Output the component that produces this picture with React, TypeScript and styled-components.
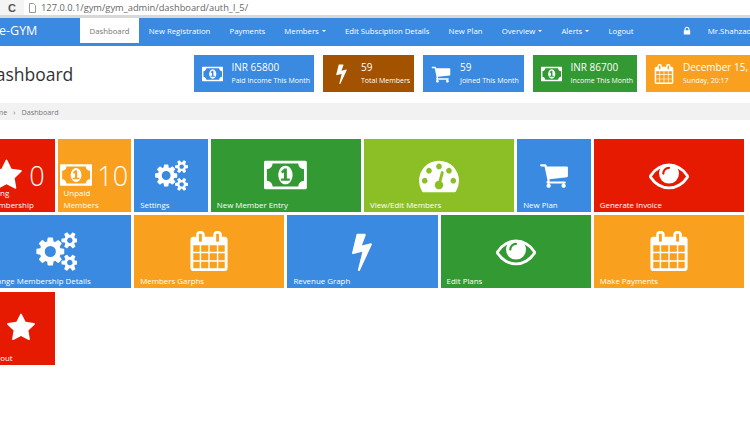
import React from "react";
import styled, { createGlobalStyle } from "styled-components";

const Global = createGlobalStyle`
  html, body { margin: 0; padding: 0; width: 750px; height: 422px; overflow: hidden; background: #fff; }
  body { font-family: "Open Sans", "Liberation Sans", sans-serif; -webkit-font-smoothing: antialiased; }
  #root { width: 750px; height: 422px; overflow: hidden; }
`;

const P = {
  star: { w: 1792, d: "M1728 647q0 22-26 48l-363 354 86 500q1 7 1 20 0 21-10.5 35.5t-30.5 14.5q-19 0-40-12l-449-236-449 236q-22 12-40 12-21 0-31.5-14.5t-10.5-35.5q0-6 2-20l86-500-364-354q-25-27-25-48 0-37 56-46l502-73 225-455q19-41 49-41t49 41l225 455 502 73q56 9 56 46z" },
  bolt: { w: 1792, d: "M1333 566q18 20 7 44l-540 1157q-13 25-42 25-4 0-14-2-17-5-25.5-19t-4.5-30l197-808-406 101q-4 1-12 1-18 0-31-11-18-15-13-39l201-825q4-14 16-23t28-9h328q19 0 32 12.5t13 29.5q0 8-5 18l-171 463 396-98q8-2 12-2 19 0 34 15z" },
  cart: { w: 1792, d: "M704 1536q0 52-38 90t-90 38-90-38-38-90 38-90 90-38 90 38 38 90zm896 0q0 52-38 90t-90 38-90-38-38-90 38-90 90-38 90 38 38 90zm128-1088v512q0 24-16.5 42.5t-40.5 21.5l-1044 122q13 60 13 70 0 16-24 64h920q26 0 45 19t19 45-19 45-45 19h-1024q-26 0-45-19t-19-45q0-11 8-31.5t16-36 21.5-40 15.5-29.5l-177-823h-204q-26 0-45-19t-19-45 19-45 45-19h256q16 0 28.5 6.5t19.5 15.5 13 24.5 8 26 5.5 29.5 4.5 26h1201q26 0 45 19t19 45z" },
  eye: { w: 1792, d: "M1664 960q-152-236-381-353 61 104 61 225 0 185-131.5 316.5t-316.5 131.5-316.5-131.5-131.5-316.5q0-121 61-225-229 117-381 353 133 205 333.5 326.5t434.5 121.5 434.5-121.5 333.5-326.5zm-720-384q0-20-14-34t-34-14q-125 0-214.5 89.5t-89.5 214.5q0 20 14 34t34 14 34-14 14-34q0-86 61-147t147-61q20 0 34-14t14-34zm848 384q0 34-20 69-140 230-376.5 368.5t-499.5 138.5-499.5-139-376.5-368q-20-35-20-69t20-69q140-229 376.5-368t499.5-139 499.5 139 376.5 368q20 35 20 69z" },
  calendar: { w: 1792, d: "M192 1664h288v-288h-288v288zm352 0h320v-288h-320v288zm-352-352h288v-320h-288v320zm352 0h320v-320h-320v320zm-352-384h288v-288h-288v288zm736 736h320v-288h-320v288zm-384-736h320v-288h-320v288zm768 736h288v-288h-288v288zm-384-352h320v-320h-320v320zm-352-864v-288q0-13-9.5-22.5t-22.5-9.5h-64q-13 0-22.5 9.5t-9.5 22.5v288q0 13 9.5 22.5t22.5 9.5h64q13 0 22.5-9.5t9.5-22.5zm736 864h288v-320h-288v320zm-384-384h320v-288h-320v288zm384 0h288v-288h-288v288zm32-480v-288q0-13-9.5-22.5t-22.5-9.5h-64q-13 0-22.5 9.5t-9.5 22.5v288q0 13 9.5 22.5t22.5 9.5h64q13 0 22.5-9.5t9.5-22.5zm384-64v1280q0 52-38 90t-90 38h-1408q-52 0-90-38t-38-90v-1280q0-52 38-90t90-38h128v-96q0-66 47-113t113-47h64q66 0 113 47t47 113v96h384v-96q0-66 47-113t113-47h64q66 0 113 47t47 113v96h128q52 0 90 38t38 90z" },
  money: { w: 1920, d: "M768 1152h384v-96h-128v-448h-114l-148 137 77 80q42-37 55-57h2v288h-128v96zm512-256q0 70-21 142t-59.5 134-101.5 101-138 39-138-39-101.5-101-59.5-134-21-142 21-142 59.5-134 101.5-101 138-39 138 39 101.5 101 59.5 134 21 142zm512 256v-512q-106 0-181-75t-75-181h-1152q0 106-75 181t-181 75v512q106 0 181 75t75 181h1152q0-106 75-181t181-75zm128-832v1152q0 26-19 45t-45 19h-1792q-26 0-45-19t-19-45v-1152q0-26 19-45t45-19h1792q26 0 45 19t19 45z" },
  cogs: { w: 1920, d: "M960 896q0-106-75-181t-181-75-181 75-75 181 75 181 181 75 181-75 75-181zm768 512q0-52-38-90t-90-38-90 38-38 90q0 53 37.5 90.5t90.5 37.5 90.5-37.5 37.5-90.5zm0-1024q0-52-38-90t-90-38-90 38-38 90q0 53 37.5 90.5t90.5 37.5 90.5-37.5 37.5-90.5zm-384 421v185q0 10-7 19.5t-16 10.5l-155 24q-11 35-32 76 34 48 90 115 7 11 7 20 0 12-7 19-23 30-82.5 89.5t-78.5 59.5q-11 0-21-7l-115-90q-37 19-77 31-11 108-23 155-7 24-30 24h-186q-11 0-20-7.5t-10-17.5l-23-153q-34-10-75-31l-118 89q-7 7-20 7-11 0-21-8-144-133-144-160 0-9 7-19 10-14 41-53t47-61q-23-44-35-82l-152-24q-10-1-17-9.5t-7-19.5v-185q0-10 7-19.5t16-10.5l155-24q11-35 32-76-34-48-90-115-7-11-7-20 0-12 7-20 22-30 82-89t79-59q11 0 21 7l115 90q34-18 77-32 11-108 23-154 7-24 30-24h186q11 0 20 7.5t10 17.5l23 153q34 10 75 31l118-89q8-7 20-7 11 0 21 8 144 133 144 160 0 8-7 19-12 16-42 54t-45 60q23 48 34 82l152 23q10 2 17 10.5t7 19.5zm640 533v140q0 16-149 31-12 27-30 52 51 113 51 138 0 4-4 7-122 71-124 71-8 0-46-47t-52-68q-20 2-30 2t-30-2q-14 21-52 68t-46 47q-2 0-124-71-4-3-4-7 0-25 51-138-18-25-30-52-149-15-149-31v-140q0-16 149-31 13-29 30-52-51-113-51-138 0-4 4-7 4-2 35-20t59-34 30-16q8 0 46 46.5t52 67.5q20-2 30-2t30 2q51-71 92-112l6-2q4 0 124 70 4 3 4 7 0 25-51 138 17 23 30 52 149 15 149 31zm0-1024v140q0 16-149 31-12 27-30 52 51 113 51 138 0 4-4 7-122 71-124 71-8 0-46-47t-52-68q-20 2-30 2t-30-2q-14 21-52 68t-46 47q-2 0-124-71-4-3-4-7 0-25 51-138-18-25-30-52-149-15-149-31v-140q0-16 149-31 13-29 30-52-51-113-51-138 0-4 4-7 4-2 35-20t59-34 30-16q8 0 46 46.5t52 67.5q20-2 30-2t30 2q51-71 92-112l6-2q4 0 124 70 4 3 4 7 0 25-51 138 17 23 30 52 149 15 149 31z" },
  gauge: { w: 1792, d: "M384 1152q0-53-37.5-90.5t-90.5-37.5-90.5 37.5-37.5 90.5 37.5 90.5 90.5 37.5 90.5-37.5 37.5-90.5zm192-448q0-53-37.5-90.5t-90.5-37.5-90.5 37.5-37.5 90.5 37.5 90.5 90.5 37.5 90.5-37.5 37.5-90.5zm428 481l101-382q6-26-7.5-48.5t-38.5-29.5-48 6.5-30 39.5l-101 382q-60 5-107 43.5t-63 98.5q-20 77 20 146t117 89 146-20 89-117q16-60-6-117t-72-91zm660-33q0-53-37.5-90.5t-90.5-37.5-90.5 37.5-37.5 90.5 37.5 90.5 90.5 37.5 90.5-37.5 37.5-90.5zm-640-640q0-53-37.5-90.5t-90.5-37.5-90.5 37.5-37.5 90.5 37.5 90.5 90.5 37.5 90.5-37.5 37.5-90.5zm448 192q0-53-37.5-90.5t-90.5-37.5-90.5 37.5-37.5 90.5 37.5 90.5 90.5 37.5 90.5-37.5 37.5-90.5zm320 448q0 261-141 483-19 29-54 29h-1402q-35 0-54-29-141-221-141-483 0-182 71-348t191-286 286-191 348-71 348 71 286 191 191 286 71 348z" },
  lock: { w: 1792, d: "M640 768h512v-192q0-106-75-181t-181-75-181 75-75 181v192zm832 96v576q0 40-28 68t-68 28h-960q-40 0-68-28t-28-68v-576q0-40 28-68t68-28h32v-192q0-184 132-316t316-132 316 132 132 316v192h32q40 0 68 28t28 68z" },
};
type IconName = keyof typeof P;

const Svg = styled.svg`
  display: block;
  flex: none;
  fill: currentColor;
`;

const Icon = ({ name, size }: { name: IconName; size: number }) => (
  <Svg width={(size * P[name].w) / 1792} height={size} viewBox={`0 0 ${P[name].w} 1792`}>
    <path d={P[name].d} />
  </Svg>
);

const Chrome = styled.div`
  height: 15px;
  display: flex;
  align-items: center;
  background: #f4f4f4;
  border-bottom: 3px solid #d8d8d8;
  overflow: hidden;
`;
const Reload = styled.span`
  width: 24px;
  text-align: center;
  font: 700 11px "Liberation Sans", sans-serif;
  color: #555;
`;
const AddressBar = styled.div`
  flex: 1;
  height: 15px;
  display: flex;
  align-items: center;
  gap: 5px;
  padding-left: 5px;
  background: #fff;
  font: 400 9.3px "Open Sans", sans-serif;
  color: #666;
`;
const PageGlyph = styled.svg`
  width: 7px;
  height: 10px;
  fill: none;
  stroke: #999;
`;

const Nav = styled.nav`
  height: 28px;
  display: flex;
  background: #398ae0;
  color: #fff;
  white-space: nowrap;
`;
const Brand = styled.div`
  width: 80px;
  margin-left: -1px;
  margin-right: 1px;
  line-height: 25px;
  font-size: 12.5px;
  flex: none;
`;
const NavItem = styled.a<{ $active?: boolean }>`
  height: 25px;
  padding: 0 9.6px;
  display: flex;
  align-items: center;
  gap: 3px;
  font-size: 7.75px;
  font-weight: 500;
  color: ${(p) => (p.$active ? "#777" : "#fff")};
  background: ${(p) => (p.$active ? "#fff" : "transparent")};
`;
const Caret = styled.i`
  width: 0;
  height: 0;
  border-left: 2.5px solid transparent;
  border-right: 2.5px solid transparent;
  border-top: 2.5px solid #fff;
`;
const NavRight = styled.div`
  margin-left: 38.5px;
  display: flex;
  align-items: center;
  height: 25px;
  gap: 16px;
  font-size: 7.9px;
  font-weight: 500;
`;

const Header = styled.header`
  height: 37px;
  margin: 9px 0 0 -17px;
  display: flex;
  align-items: center;
  white-space: nowrap;
`;
const Title = styled.h1`
  flex: 0 0 211px;
  margin: 0;
  font-size: 17.5px;
  font-weight: 400;
  color: #333;
`;
const Stats = styled.div`
  display: flex;
  gap: 9px;
`;
const Stat = styled.div<{ $bg: string; $w: number; $gap: number }>`
  width: ${(p) => p.$w}px;
  height: 37px;
  flex: none;
  display: flex;
  align-items: center;
  gap: ${(p) => p.$gap}px;
  padding-left: 8px;
  box-sizing: border-box;
  background: ${(p) => p.$bg};
  color: #fff;
`;
const StatBody = styled.div`
  display: flex;
  flex-direction: column;
`;
const StatTitle = styled.span`
  font-size: 10px;
  line-height: 15px;
`;
const StatSub = styled.span`
  font-size: 7px;
  line-height: 12px;
  font-weight: 500;
`;

const Breadcrumb = styled.div`
  height: 17px;
  margin: 11px 0 0 -19px;
  padding-left: 6px;
  display: flex;
  align-items: center;
  gap: 6px;
  background: #f2f2f2;
  font-size: 7.2px;
  color: #777;
  white-space: nowrap;
`;

const Grid = styled.main`
  width: 770px;
  margin: 19px 0 0 -19px;
  display: grid;
  grid-template-columns: repeat(10, 73.6px);
  grid-auto-rows: 73px;
  gap: 3.4px 3px;
`;
const Tile = styled.div<{ $bg: string; $span?: number }>`
  grid-column: span ${(p) => p.$span ?? 1};
  display: flex;
  flex-direction: column;
  background: ${(p) => p.$bg};
  color: #fff;
  overflow: hidden;
`;
const TileArt = styled.div<{ $nudge?: number }>`
  flex: 1;
  min-height: 0;
  display: flex;
  align-items: center;
  justify-content: center;
  padding-left: ${(p) => p.$nudge ?? 0}px;
  padding-bottom: 1px;
`;
const TileLabel = styled.div`
  margin-top: -13px;
  padding: 0 6px;
  font-size: 7.9px;
  line-height: 12px;
  font-weight: 500;
  height: 12px;
  margin-bottom: 1px;
`;
const CountRow = styled.div<{ $right: number; $gap: number }>`
  height: 44px;
  margin: 14px 0 -10px;
  display: flex;
  align-items: center;
  justify-content: flex-end;
  gap: ${(p) => p.$gap}px;
  padding-right: ${(p) => p.$right}px;
`;
const Count = styled.span`
  font-size: 27px;
  font-weight: 300;
  line-height: 1;
`;
const TwoLineLabel = styled.div`
  padding: 0 6px;
  font-size: 7.9px;
  line-height: 12px;
  font-weight: 500;
`;

const navItems: { t: string; caret?: boolean; active?: boolean }[] = [
  { t: "Dashboard", active: true },
  { t: "New Registration" },
  { t: "Payments" },
  { t: "Members", caret: true },
  { t: "Edit Subsciption Details" },
  { t: "New Plan" },
  { t: "Overview", caret: true },
  { t: "Alerts", caret: true },
  { t: "Logout" },
];

const BLUE = "#398ae0";
const ORANGE = "#f9a11e";
const GREEN = "#339933";
const RED = "#e61a00";
const LIME = "#8cbf26";

const stats = [
  { bg: BLUE, w: 120, gap: 8, icon: "money" as IconName, size: 20, title: "INR 65800", sub: "Paid Income This Month" },
  { bg: "#a35200", w: 91, gap: 9, icon: "bolt" as IconName, size: 21, title: "59", sub: "Total Members" },
  { bg: BLUE, w: 101, gap: 9, icon: "cart" as IconName, size: 20, title: "59", sub: "Joined This Month" },
  { bg: GREEN, w: 104, gap: 8, icon: "money" as IconName, size: 20, title: "INR 86700", sub: "Income This Month" },
  { bg: ORANGE, w: 140, gap: 9, icon: "calendar" as IconName, size: 20, title: "December 15, 2019", sub: "Sunday, 20:17" },
];

const tiles = [
  { bg: BLUE, label: "Settings", icon: "cogs" as IconName, size: 31 },
  { bg: GREEN, span: 2, label: "New Member Entry", icon: "money" as IconName, size: 40 },
  { bg: LIME, span: 2, label: "View/Edit Members", icon: "gauge" as IconName, size: 40 },
  { bg: BLUE, label: "New Plan", icon: "cart" as IconName, size: 30 },
  { bg: RED, span: 2, label: "Generate Invoice", icon: "eye" as IconName, size: 40 },
  { bg: BLUE, span: 2, label: "Change Membership Details", icon: "cogs" as IconName, size: 39 },
  { bg: ORANGE, span: 2, label: "Members Garphs", icon: "calendar" as IconName, size: 40 },
  { bg: BLUE, span: 2, label: "Revenue Graph", icon: "bolt" as IconName, size: 40 },
  { bg: GREEN, span: 2, label: "Edit Plans", icon: "eye" as IconName, size: 40 },
  { bg: ORANGE, span: 2, label: "Make Payments", icon: "calendar" as IconName, size: 40 },
];

export default function App() {
  return (
    <>
      <Global />
      <Chrome>
        <Reload>C</Reload>
        <AddressBar>
          <PageGlyph viewBox="0 0 7 10"><path d="M.5.5h4l2 2v7h-6z" /></PageGlyph>
          127.0.0.1/gym/gym_admin/dashboard/auth_l_5/
        </AddressBar>
      </Chrome>
      <Nav>
        <Brand>e-GYM</Brand>
        {navItems.map((n) => (
          <NavItem key={n.t} $active={n.active}>
            {n.t}
            {n.caret && <Caret />}
          </NavItem>
        ))}
        <NavRight>
          <Icon name="lock" size={10} />
          <span>Mr.Shahzad</span>
        </NavRight>
      </Nav>
      <Header>
        <Title>Dashboard</Title>
        <Stats>
          {stats.map((s) => (
            <Stat key={s.sub} $bg={s.bg} $w={s.w} $gap={s.gap}>
              <Icon name={s.icon} size={s.size} />
              <StatBody>
                <StatTitle>{s.title}</StatTitle>
                <StatSub>{s.sub}</StatSub>
              </StatBody>
            </Stat>
          ))}
        </Stats>
      </Header>
      <Breadcrumb>
        <span>Home</span>
        <span>›</span>
        <span>Dashboard</span>
      </Breadcrumb>
      <Grid>
        <Tile $bg={RED}>
          <CountRow $right={10} $gap={6}>
            <Icon name="star" size={33} />
            <Count>0</Count>
          </CountRow>
          <TwoLineLabel>Billing<br />Membership</TwoLineLabel>
        </Tile>
        <Tile $bg={ORANGE}>
          <CountRow $right={3} $gap={5}>
            <Icon name="money" size={30} />
            <Count>10</Count>
          </CountRow>
          <TwoLineLabel>Unpaid<br />Members</TwoLineLabel>
        </Tile>
        {tiles.map((t) => (
          <Tile key={t.label} $bg={t.bg} $span={t.span}>
            <TileArt><Icon name={t.icon} size={t.size} /></TileArt>
            <TileLabel>{t.label}</TileLabel>
          </Tile>
        ))}
        <Tile $bg={RED}>
          <TileArt $nudge={6}><Icon name="star" size={30} /></TileArt>
          <TileLabel>Logout</TileLabel>
        </Tile>
      </Grid>
    </>
  );
}
